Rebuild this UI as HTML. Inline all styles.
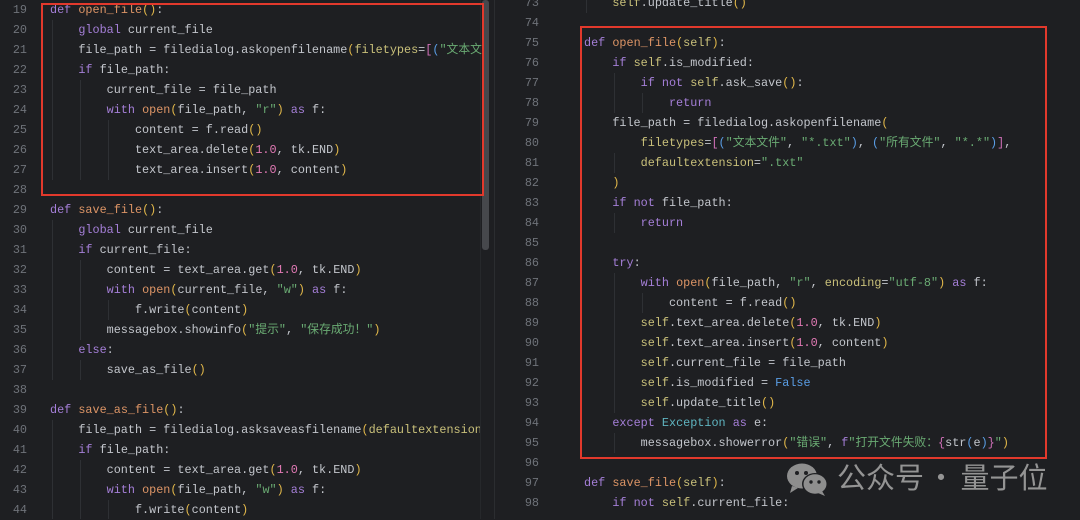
<!DOCTYPE html>
<html><head><meta charset="utf-8"><style>
body{margin:0;width:1080px;height:519px;background:#1e1f22;overflow:hidden;position:relative;font-family:"Liberation Mono","Noto Sans CJK SC",monospace;font-size:11.8px;color:#c3c6cc}
.l{position:absolute;height:20px;line-height:20px;white-space:pre}
.n{position:absolute;height:20px;line-height:20px;color:#6f737a;text-align:right;width:30px}
.k{color:#a57fd8}.f{color:#dd9566}.s{color:#6aab73}.d{color:#e27ab5}.p{color:#e2b84a}.b{color:#d070b8}.q{color:#5a9ee6}.e{color:#c9c07a}.t{color:#5fb4c0}.c{color:#5a9ee6}
.box{position:absolute;border:2px solid #e2392c;box-sizing:border-box}
.g{position:absolute;width:1px;background:#2e3034}
</style></head><body>
<div style="position:absolute;left:482px;top:0;width:7px;height:250px;background:#46484c;border-radius:3px"></div>
<div style="position:absolute;left:480px;top:0;width:1px;height:519px;background:#26282b"></div>
<div style="position:absolute;left:494px;top:0;width:1px;height:519px;background:#2b2d30"></div>
<div class="g" style="left:52px;top:20px;height:160px"></div>
<div class="g" style="left:80px;top:80px;height:100px"></div>
<div class="g" style="left:108px;top:120px;height:60px"></div>
<div class="g" style="left:52px;top:220px;height:160px"></div>
<div class="g" style="left:80px;top:260px;height:80px"></div>
<div class="g" style="left:108px;top:300px;height:20px"></div>
<div class="g" style="left:80px;top:360px;height:20px"></div>
<div class="g" style="left:52px;top:420px;height:99px"></div>
<div class="g" style="left:80px;top:460px;height:59px"></div>
<div class="g" style="left:108px;top:500px;height:19px"></div>
<div class="g" style="left:586px;top:-7px;height:20px"></div>
<div class="g" style="left:614px;top:73px;height:40px"></div>
<div class="g" style="left:642px;top:93px;height:20px"></div>
<div class="g" style="left:614px;top:153px;height:20px"></div>
<div class="g" style="left:614px;top:213px;height:20px"></div>
<div class="g" style="left:614px;top:273px;height:140px"></div>
<div class="g" style="left:642px;top:293px;height:20px"></div>
<div class="g" style="left:614px;top:433px;height:20px"></div>

<div class="n" style="left:-3px;top:0">19</div><div class="l" style="left:50px;top:0"><span class="k">def</span> <span class="f">open_file</span><span class="p">()</span>:</div>
<div class="n" style="left:-3px;top:20px">20</div><div class="l" style="left:50px;top:20px">    <span class="k">global</span> current_file</div>
<div class="n" style="left:-3px;top:40px">21</div><div class="l" style="left:50px;top:40px">    file_path = filedialog.askopenfilename<span class="p">(</span><span class="e">filetypes</span>=<span class="b">[</span><span class="q">(</span><span class="s">"文本文</span></div>
<div class="n" style="left:-3px;top:60px">22</div><div class="l" style="left:50px;top:60px">    <span class="k">if</span> file_path:</div>
<div class="n" style="left:-3px;top:80px">23</div><div class="l" style="left:50px;top:80px">        current_file = file_path</div>
<div class="n" style="left:-3px;top:100px">24</div><div class="l" style="left:50px;top:100px">        <span class="k">with</span> <span class="f">open</span><span class="p">(</span>file_path, <span class="s">"r"</span><span class="p">)</span> <span class="k">as</span> f:</div>
<div class="n" style="left:-3px;top:120px">25</div><div class="l" style="left:50px;top:120px">            content = f.read<span class="p">()</span></div>
<div class="n" style="left:-3px;top:140px">26</div><div class="l" style="left:50px;top:140px">            text_area.delete<span class="p">(</span><span class="d">1.0</span>, tk.END<span class="p">)</span></div>
<div class="n" style="left:-3px;top:160px">27</div><div class="l" style="left:50px;top:160px">            text_area.insert<span class="p">(</span><span class="d">1.0</span>, content<span class="p">)</span></div>
<div class="n" style="left:-3px;top:180px">28</div>
<div class="n" style="left:-3px;top:200px">29</div><div class="l" style="left:50px;top:200px"><span class="k">def</span> <span class="f">save_file</span><span class="p">()</span>:</div>
<div class="n" style="left:-3px;top:220px">30</div><div class="l" style="left:50px;top:220px">    <span class="k">global</span> current_file</div>
<div class="n" style="left:-3px;top:240px">31</div><div class="l" style="left:50px;top:240px">    <span class="k">if</span> current_file:</div>
<div class="n" style="left:-3px;top:260px">32</div><div class="l" style="left:50px;top:260px">        content = text_area.get<span class="p">(</span><span class="d">1.0</span>, tk.END<span class="p">)</span></div>
<div class="n" style="left:-3px;top:280px">33</div><div class="l" style="left:50px;top:280px">        <span class="k">with</span> <span class="f">open</span><span class="p">(</span>current_file, <span class="s">"w"</span><span class="p">)</span> <span class="k">as</span> f:</div>
<div class="n" style="left:-3px;top:300px">34</div><div class="l" style="left:50px;top:300px">            f.write<span class="p">(</span>content<span class="p">)</span></div>
<div class="n" style="left:-3px;top:320px">35</div><div class="l" style="left:50px;top:320px">        messagebox.showinfo<span class="p">(</span><span class="s">"提示"</span>, <span class="s">"保存成功！"</span><span class="p">)</span></div>
<div class="n" style="left:-3px;top:340px">36</div><div class="l" style="left:50px;top:340px">    <span class="k">else</span>:</div>
<div class="n" style="left:-3px;top:360px">37</div><div class="l" style="left:50px;top:360px">        save_as_file<span class="p">()</span></div>
<div class="n" style="left:-3px;top:380px">38</div>
<div class="n" style="left:-3px;top:400px">39</div><div class="l" style="left:50px;top:400px"><span class="k">def</span> <span class="f">save_as_file</span><span class="p">()</span>:</div>
<div class="n" style="left:-3px;top:420px">40</div><div class="l" style="left:50px;top:420px;width:430px;overflow:hidden">    file_path = filedialog.asksaveasfilename<span class="p">(</span><span class="e">defaultextension</span>=</div>
<div class="n" style="left:-3px;top:440px">41</div><div class="l" style="left:50px;top:440px">    <span class="k">if</span> file_path:</div>
<div class="n" style="left:-3px;top:460px">42</div><div class="l" style="left:50px;top:460px">        content = text_area.get<span class="p">(</span><span class="d">1.0</span>, tk.END<span class="p">)</span></div>
<div class="n" style="left:-3px;top:480px">43</div><div class="l" style="left:50px;top:480px">        <span class="k">with</span> <span class="f">open</span><span class="p">(</span>file_path, <span class="s">"w"</span><span class="p">)</span> <span class="k">as</span> f:</div>
<div class="n" style="left:-3px;top:500px">44</div><div class="l" style="left:50px;top:500px">            f.write<span class="p">(</span>content<span class="p">)</span></div>

<div class="n" style="left:509px;top:-7px">73</div><div class="l" style="left:584px;top:-7px">    <span class="e">self</span>.update_title<span class="p">()</span></div>
<div class="n" style="left:509px;top:13px">74</div>
<div class="n" style="left:509px;top:33px">75</div><div class="l" style="left:584px;top:33px"><span class="k">def</span> <span class="f">open_file</span><span class="p">(</span><span class="e">self</span><span class="p">)</span>:</div>
<div class="n" style="left:509px;top:53px">76</div><div class="l" style="left:584px;top:53px">    <span class="k">if</span> <span class="e">self</span>.is_modified:</div>
<div class="n" style="left:509px;top:73px">77</div><div class="l" style="left:584px;top:73px">        <span class="k">if not</span> <span class="e">self</span>.ask_save<span class="p">()</span>:</div>
<div class="n" style="left:509px;top:93px">78</div><div class="l" style="left:584px;top:93px">            <span class="k">return</span></div>
<div class="n" style="left:509px;top:113px">79</div><div class="l" style="left:584px;top:113px">    file_path = filedialog.askopenfilename<span class="p">(</span></div>
<div class="n" style="left:509px;top:133px">80</div><div class="l" style="left:584px;top:133px">        <span class="e">filetypes</span>=<span class="b">[</span><span class="q">(</span><span class="s">"文本文件"</span>, <span class="s">"*.txt"</span><span class="q">)</span>, <span class="q">(</span><span class="s">"所有文件"</span>, <span class="s">"*.*"</span><span class="q">)</span><span class="b">]</span>,</div>
<div class="n" style="left:509px;top:153px">81</div><div class="l" style="left:584px;top:153px">        <span class="e">defaultextension</span>=<span class="s">".txt"</span></div>
<div class="n" style="left:509px;top:173px">82</div><div class="l" style="left:584px;top:173px">    <span class="p">)</span></div>
<div class="n" style="left:509px;top:193px">83</div><div class="l" style="left:584px;top:193px">    <span class="k">if not</span> file_path:</div>
<div class="n" style="left:509px;top:213px">84</div><div class="l" style="left:584px;top:213px">        <span class="k">return</span></div>
<div class="n" style="left:509px;top:233px">85</div>
<div class="n" style="left:509px;top:253px">86</div><div class="l" style="left:584px;top:253px">    <span class="k">try</span>:</div>
<div class="n" style="left:509px;top:273px">87</div><div class="l" style="left:584px;top:273px">        <span class="k">with</span> <span class="f">open</span><span class="p">(</span>file_path, <span class="s">"r"</span>, <span class="e">encoding</span>=<span class="s">"utf-8"</span><span class="p">)</span> <span class="k">as</span> f:</div>
<div class="n" style="left:509px;top:293px">88</div><div class="l" style="left:584px;top:293px">            content = f.read<span class="p">()</span></div>
<div class="n" style="left:509px;top:313px">89</div><div class="l" style="left:584px;top:313px">        <span class="e">self</span>.text_area.delete<span class="p">(</span><span class="d">1.0</span>, tk.END<span class="p">)</span></div>
<div class="n" style="left:509px;top:333px">90</div><div class="l" style="left:584px;top:333px">        <span class="e">self</span>.text_area.insert<span class="p">(</span><span class="d">1.0</span>, content<span class="p">)</span></div>
<div class="n" style="left:509px;top:353px">91</div><div class="l" style="left:584px;top:353px">        <span class="e">self</span>.current_file = file_path</div>
<div class="n" style="left:509px;top:373px">92</div><div class="l" style="left:584px;top:373px">        <span class="e">self</span>.is_modified = <span class="c">False</span></div>
<div class="n" style="left:509px;top:393px">93</div><div class="l" style="left:584px;top:393px">        <span class="e">self</span>.update_title<span class="p">()</span></div>
<div class="n" style="left:509px;top:413px">94</div><div class="l" style="left:584px;top:413px">    <span class="k">except</span> <span class="t">Exception</span> <span class="k">as</span> e:</div>
<div class="n" style="left:509px;top:433px">95</div><div class="l" style="left:584px;top:433px">        messagebox.showerror<span class="p">(</span><span class="s">"错误"</span>, <span class="k">f</span><span class="s">"打开文件失败：</span><span class="b">{</span>str<span class="q">(</span>e<span class="q">)</span><span class="b">}</span><span class="s">"</span><span class="p">)</span></div>
<div class="n" style="left:509px;top:453px">96</div>
<div class="n" style="left:509px;top:473px">97</div><div class="l" style="left:584px;top:473px"><span class="k">def</span> <span class="f">save_file</span><span class="p">(</span><span class="e">self</span><span class="p">)</span>:</div>
<div class="n" style="left:509px;top:493px">98</div><div class="l" style="left:584px;top:493px">    <span class="k">if not</span> <span class="e">self</span>.current_file:</div>

<div class="box" style="left:41px;top:3px;width:443px;height:193px"></div>
<div class="box" style="left:580px;top:26px;width:467px;height:433px"></div>

<svg style="position:absolute;left:786px;top:462px" width="44" height="36" viewBox="0 0 44 36">
<ellipse cx="16" cy="14" rx="15" ry="12.5" fill="#8e8e8e"/>
<path d="M6 24 L4 31 L12 26 Z" fill="#8e8e8e"/>
<ellipse cx="29" cy="22" rx="13" ry="11" fill="#1e1f22"/>
<ellipse cx="29" cy="22" rx="11.5" ry="9.8" fill="#8e8e8e"/>
<path d="M36 29 L39 34 L32 31 Z" fill="#8e8e8e"/>
<circle cx="11" cy="11" r="2" fill="#1e1f22"/><circle cx="20" cy="11" r="2" fill="#1e1f22"/>
<circle cx="25" cy="20" r="1.7" fill="#1e1f22"/><circle cx="33" cy="20" r="1.7" fill="#1e1f22"/>
</svg>
<div style="position:absolute;left:837px;top:456px;font-family:'Noto Sans CJK SC',sans-serif;font-size:29px;line-height:40px;color:#949494;white-space:pre">公众号<span style="letter-spacing:-4px"> · </span> 量子位</div>
</body></html>
